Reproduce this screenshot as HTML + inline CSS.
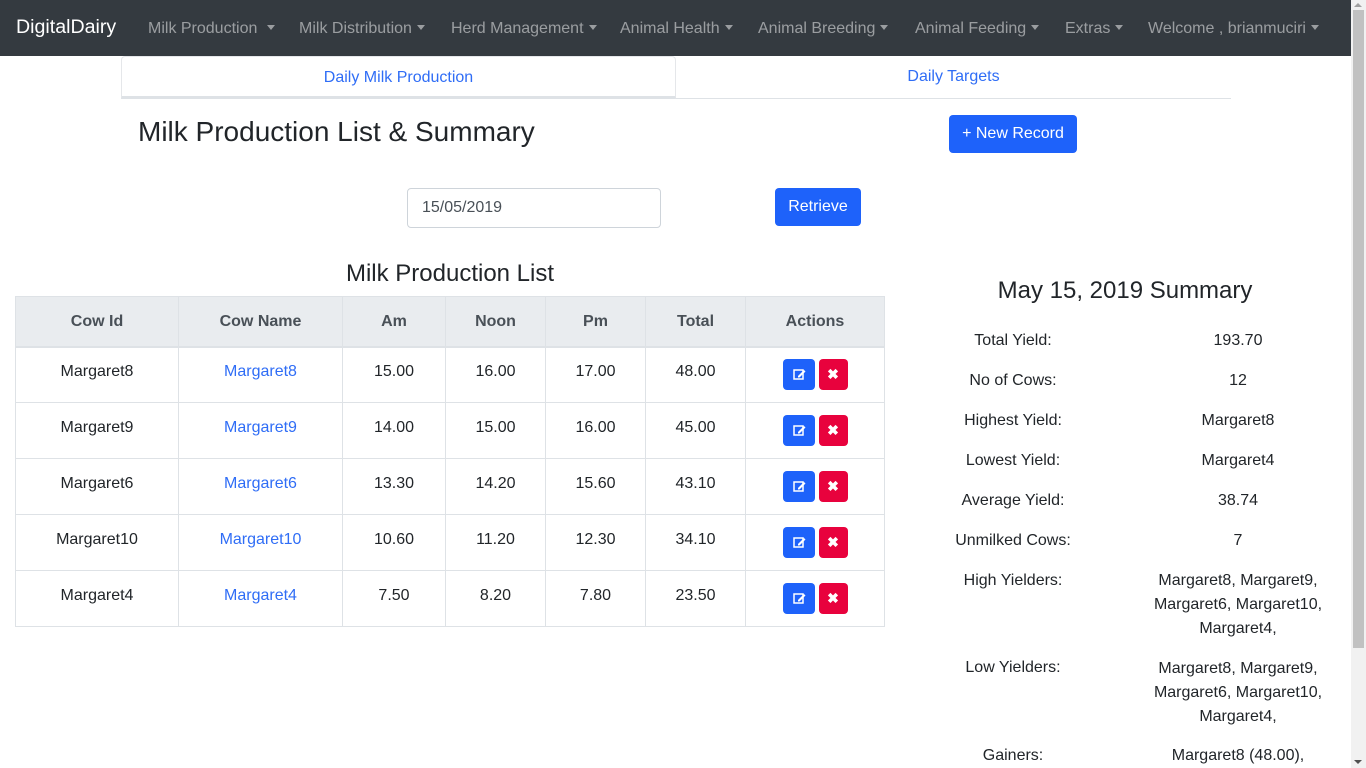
<!DOCTYPE html>
<html><head><meta charset="utf-8"><style>
*{box-sizing:border-box;margin:0;padding:0}
body{width:1366px;height:768px;overflow:hidden;font-family:"Liberation Sans",sans-serif;color:#212529;background:#fff;position:relative;font-size:16px}
.nav{position:absolute;left:0;top:0;width:1351px;height:56px;background:#343a40}
.brand{position:absolute;left:16px;top:16px;color:#fff;font-size:19.6px}
.ni{position:absolute;top:20px;color:rgba(255,255,255,.5);font-size:16px;white-space:nowrap}
.ni:after{content:"";display:inline-block;margin-left:5px;vertical-align:3px;border-top:5px solid rgba(255,255,255,.5);border-left:4.5px solid transparent;border-right:4.5px solid transparent}
.sb{position:absolute;left:1351px;top:0;width:15px;height:768px;background:#f1f1f1}
.sb .th{position:absolute;left:2px;top:10px;width:11px;height:638px;background:#c1c1c1}
.tab{position:absolute;top:56px;height:43px;text-align:center;line-height:41px;color:#2f6df6;font-size:16px}
.btn{position:absolute;background:#1e62fa;color:#fff;border-radius:4px;text-align:center;font-size:16px}
table{position:absolute;left:15px;top:296px;width:870px;border-collapse:collapse;font-size:16px}
td,th{border:1px solid #dee2e6;text-align:center;height:56px}
td{padding-bottom:6px}
td.a{padding-bottom:0}
th{background:#e9ecef;height:50px;border-bottom:2px solid #dee2e6;color:#495057;padding-top:2px}
td.l{color:#2f6df6}
.e,.x{display:inline-block;height:31px;border-radius:4px;vertical-align:middle;position:relative}
.e{background:#1e62fa;width:32px;margin-right:4px}.x{background:#e8023d;width:29px;color:#fff;font-weight:bold;font-size:14px;line-height:31px}
.s{position:absolute;font-size:16px;text-align:center}
</style></head><body>
<div class="nav">
<div class="brand">DigitalDairy</div>
<div class="ni" style="left:148px">Milk Production&nbsp;</div>
<div class="ni" style="left:299px">Milk Distribution</div>
<div class="ni" style="left:451px">Herd Management</div>
<div class="ni" style="left:620px">Animal Health</div>
<div class="ni" style="left:758px">Animal Breeding</div>
<div class="ni" style="left:915px">Animal Feeding</div>
<div class="ni" style="left:1065px">Extras</div>
<div class="ni" style="left:1148px">Welcome , brianmuciri</div>
</div>
<div class="sb"><div class="th"></div>
<div style="position:absolute;left:3px;top:3px;border-bottom:4px solid #a0a0a0;border-left:4.5px solid transparent;border-right:4.5px solid transparent"></div>
<div style="position:absolute;left:3px;top:760px;border-top:4px solid #505050;border-left:4.5px solid transparent;border-right:4.5px solid transparent"></div></div>
<div class="tab" style="left:121px;width:555px;border:1px solid #e5e7ea;border-bottom:3px solid #dee2e6;border-radius:4px 4px 0 0">Daily Milk Production</div>
<div class="tab" style="left:676px;width:555px;border-bottom:1px solid #dee2e6;line-height:42px">Daily Targets</div>
<div style="position:absolute;left:138px;top:116px;font-size:28px">Milk Production List &amp; Summary</div>
<div class="btn" style="left:949px;top:115px;width:128px;height:38px;line-height:38px">+ New Record</div>
<div style="position:absolute;left:407px;top:188px;width:254px;height:40px;border:1px solid #ced4da;border-radius:4px;padding-left:14px;line-height:38px;color:#495057">15/05/2019</div>
<div class="btn" style="left:775px;top:188px;width:86px;height:38px;line-height:38px">Retrieve</div>
<div style="position:absolute;left:15px;width:870px;top:260px;text-align:center;font-size:24px">Milk Production List</div>
<table>
<tr><th style="width:163px">Cow Id</th><th style="width:164px">Cow Name</th><th style="width:103px">Am</th><th style="width:100px">Noon</th><th style="width:100px">Pm</th><th style="width:100px">Total</th><th>Actions</th></tr>
<tr><td>Margaret8</td><td class="l">Margaret8</td><td>15.00</td><td>16.00</td><td>17.00</td><td>48.00</td><td class="a"><span class="e"><svg width="32" height="31"><rect x="11" y="11" width="9" height="9" fill="none" stroke="#fff" stroke-width="1.5"/><path d="M15 17l6-6 1.5 1.5-6 6h-1.5z" fill="#fff"/></svg></span><span class="x">✖</span></td></tr>
<tr><td>Margaret9</td><td class="l">Margaret9</td><td>14.00</td><td>15.00</td><td>16.00</td><td>45.00</td><td class="a"><span class="e"><svg width="32" height="31"><rect x="11" y="11" width="9" height="9" fill="none" stroke="#fff" stroke-width="1.5"/><path d="M15 17l6-6 1.5 1.5-6 6h-1.5z" fill="#fff"/></svg></span><span class="x">✖</span></td></tr>
<tr><td>Margaret6</td><td class="l">Margaret6</td><td>13.30</td><td>14.20</td><td>15.60</td><td>43.10</td><td class="a"><span class="e"><svg width="32" height="31"><rect x="11" y="11" width="9" height="9" fill="none" stroke="#fff" stroke-width="1.5"/><path d="M15 17l6-6 1.5 1.5-6 6h-1.5z" fill="#fff"/></svg></span><span class="x">✖</span></td></tr>
<tr><td>Margaret10</td><td class="l">Margaret10</td><td>10.60</td><td>11.20</td><td>12.30</td><td>34.10</td><td class="a"><span class="e"><svg width="32" height="31"><rect x="11" y="11" width="9" height="9" fill="none" stroke="#fff" stroke-width="1.5"/><path d="M15 17l6-6 1.5 1.5-6 6h-1.5z" fill="#fff"/></svg></span><span class="x">✖</span></td></tr>
<tr><td>Margaret4</td><td class="l">Margaret4</td><td>7.50</td><td>8.20</td><td>7.80</td><td>23.50</td><td class="a"><span class="e"><svg width="32" height="31"><rect x="11" y="11" width="9" height="9" fill="none" stroke="#fff" stroke-width="1.5"/><path d="M15 17l6-6 1.5 1.5-6 6h-1.5z" fill="#fff"/></svg></span><span class="x">✖</span></td></tr>
</table>
<div class="s" style="left:900px;width:450px;top:277px;font-size:24px">May 15, 2019 Summary</div>
<div class="s" style="left:913px;width:200px;top:321px;line-height:40px">Total Yield:<br>No of Cows:<br>Highest Yield:<br>Lowest Yield:<br>Average Yield:<br>Unmilked Cows:<br>High Yielders:</div>
<div class="s" style="left:1138px;width:200px;top:321px;line-height:40px">193.70<br>12<br>Margaret8<br>Margaret4<br>38.74<br>7</div>
<div class="s" style="left:1138px;width:200px;top:569px;line-height:24px">Margaret8, Margaret9, Margaret6, Margaret10, Margaret4,</div>
<div class="s" style="left:913px;width:200px;top:659px">Low Yielders:</div>
<div class="s" style="left:1138px;width:200px;top:657px;line-height:24px">Margaret8, Margaret9, Margaret6, Margaret10, Margaret4,</div>
<div class="s" style="left:913px;width:200px;top:747px">Gainers:</div>
<div class="s" style="left:1138px;width:200px;top:747px">Margaret8 (48.00),</div>
</body></html>
